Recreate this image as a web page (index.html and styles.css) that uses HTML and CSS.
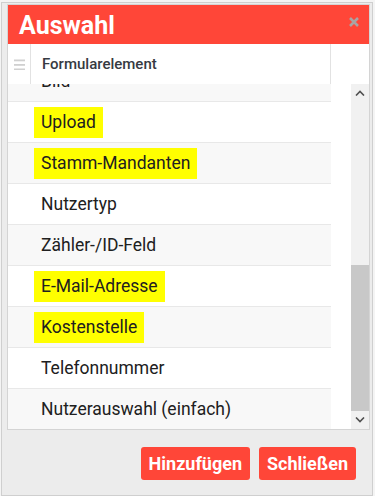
FILE: index.html
```html
<!DOCTYPE html>
<html>

<head>
    <meta charset="utf-8">
    <meta name="viewport" content="width=device-width,initial-scale=1.0">
    <title>Auswahl</title>
    <link rel="stylesheet" href="styles.css">
</head>

<body>
    <div class="dialog">
        <div class="panel">
            <div class="titlebar">
                <span class="title">Auswahl</span>
                <svg class="close" width="10" height="10" viewBox="0 0 10 10">
                    <path d="M1 1L9 9M9 1L1 9" stroke="#a9a4a4" stroke-width="2.6" fill="none" />
                </svg>
            </div>
            <div class="thead">
                <div class="th-handle">
                    <svg width="11" height="11" viewBox="0 0 11 11">
                        <rect x="0" y="0.5" width="11" height="1.8" fill="#d0d0d0" />
                        <rect x="0" y="5" width="11" height="1.8" fill="#d0d0d0" />
                        <rect x="0" y="9.5" width="11" height="1.8" fill="#d0d0d0" />
                    </svg>
                </div>
                <div class="th-name">Formularelement</div>
                <div class="th-rest"></div>
            </div>
            <div class="tbody">
                <div class="viewport">
                    <div class="rows">
                        <div class="row"><span>Bild</span></div>
                        <div class="row"><span class="mark">Upload</span></div>
                        <div class="row"><span class="mark">Stamm-Mandanten</span></div>
                        <div class="row"><span>Nutzertyp</span></div>
                        <div class="row"><span>Zähler-/ID-Feld</span></div>
                        <div class="row"><span class="mark">E-Mail-Adresse</span></div>
                        <div class="row"><span class="mark">Kostenstelle</span></div>
                        <div class="row"><span>Telefonnummer</span></div>
                        <div class="row"><span>Nutzerauswahl (einfach)</span></div>
                    </div>
                </div>
                <div class="gutter"></div>
                <div class="scrollbar">
                    <div class="sb-btn">
                        <svg width="10" height="6" viewBox="0 0 10 6">
                            <polyline points="1,5.5 5,1.5 9,5.5" stroke="#505050" stroke-width="1.6" fill="none" />
                        </svg>
                    </div>
                    <div class="sb-track">
                        <div class="sb-thumb"></div>
                    </div>
                    <div class="sb-btn">
                        <svg width="10" height="6" viewBox="0 0 10 6">
                            <polyline points="1,0.5 5,4.5 9,0.5" stroke="#505050" stroke-width="1.6" fill="none" />
                        </svg>
                    </div>
                </div>
            </div>
        </div>
        <div class="actions">
            <button class="btn">Hinzufügen</button>
            <button class="btn">Schließen</button>
        </div>
    </div>
</body>

</html>
```

FILE: styles.css
```css
html,
body {
    margin: 0;
    padding: 0;
}

body {
    background: #f4f4f4;
    font-family: Roboto, "Liberation Sans", Arial, sans-serif;
    padding: 2px 0 0 1px;
}

.dialog {
    box-sizing: border-box;
    width: 372px;
    height: 494px;
    border: 1px solid #cfcfcf;
    background: #ececec;
    padding: 1px 2px 0 5px;
}

.panel {
    width: 363px;
    box-sizing: border-box;
    border: 1px solid #d4d4d4;
    background: #fff;
}

.titlebar {
    height: 39px;
    background: #ff4638;
    display: flex;
    align-items: center;
    justify-content: space-between;
    padding: 0 10px 0 11px;
}

.title {
    color: #fff;
    font-size: 25px;
    font-weight: 700;
    line-height: 39px;
    padding-top: 1px;
}

.close {
    margin-top: -5px;
}

.thead {
    display: flex;
    height: 40px;
    background: #fff;
}

.th-handle {
    width: 23px;
    box-sizing: border-box;
    display: flex;
    align-items: center;
    justify-content: center;
    border-right: 1px solid #e2e2e2;
    padding-left: 1px;
}

.th-name {
    width: 300px;
    box-sizing: border-box;
    border-right: 1px solid #e2e2e2;
    padding-left: 11px;
    display: flex;
    align-items: center;
    font-size: 15px;
    font-weight: 500;
    color: #363a42;
}

.th-rest {
    flex: 1;
}

.tbody {
    display: flex;
    height: 345px;
}

.viewport {
    width: 323px;
    overflow: hidden;
}

.rows {
    margin-top: -23px;
}

.row {
    height: 41px;
    box-sizing: border-box;
    border-bottom: 1px solid #e8e8e8;
    display: flex;
    align-items: center;
    padding-left: 26px;
    font-size: 17.5px;
    color: #202020;
}

.row:nth-child(odd) {
    background: #f8f8f8;
}

.row span {
    padding: 5px 7px;
    line-height: 21px;
}

.row .mark {
    background: #ffff00;
}

.gutter {
    width: 20px;
}

.scrollbar {
    width: 18px;
    display: flex;
    flex-direction: column;
    background: #f1f1f1;
}

.sb-btn {
    height: 18px;
    display: flex;
    align-items: center;
    justify-content: center;
}

.sb-track {
    flex: 1;
}

.sb-thumb {
    margin-top: 163px;
    height: 146px;
    background: #c8c8c8;
}

.actions {
    display: flex;
    justify-content: flex-end;
    gap: 9px;
    margin-top: 17px;
    padding-right: 14px;
}

.btn {
    height: 33px;
    border: 0;
    border-radius: 3px;
    background: #ff4638;
    color: #fff;
    font-family: Roboto, "Liberation Sans", Arial, sans-serif;
    font-size: 18px;
    font-weight: 700;
    padding: 0 8px;
}
```
